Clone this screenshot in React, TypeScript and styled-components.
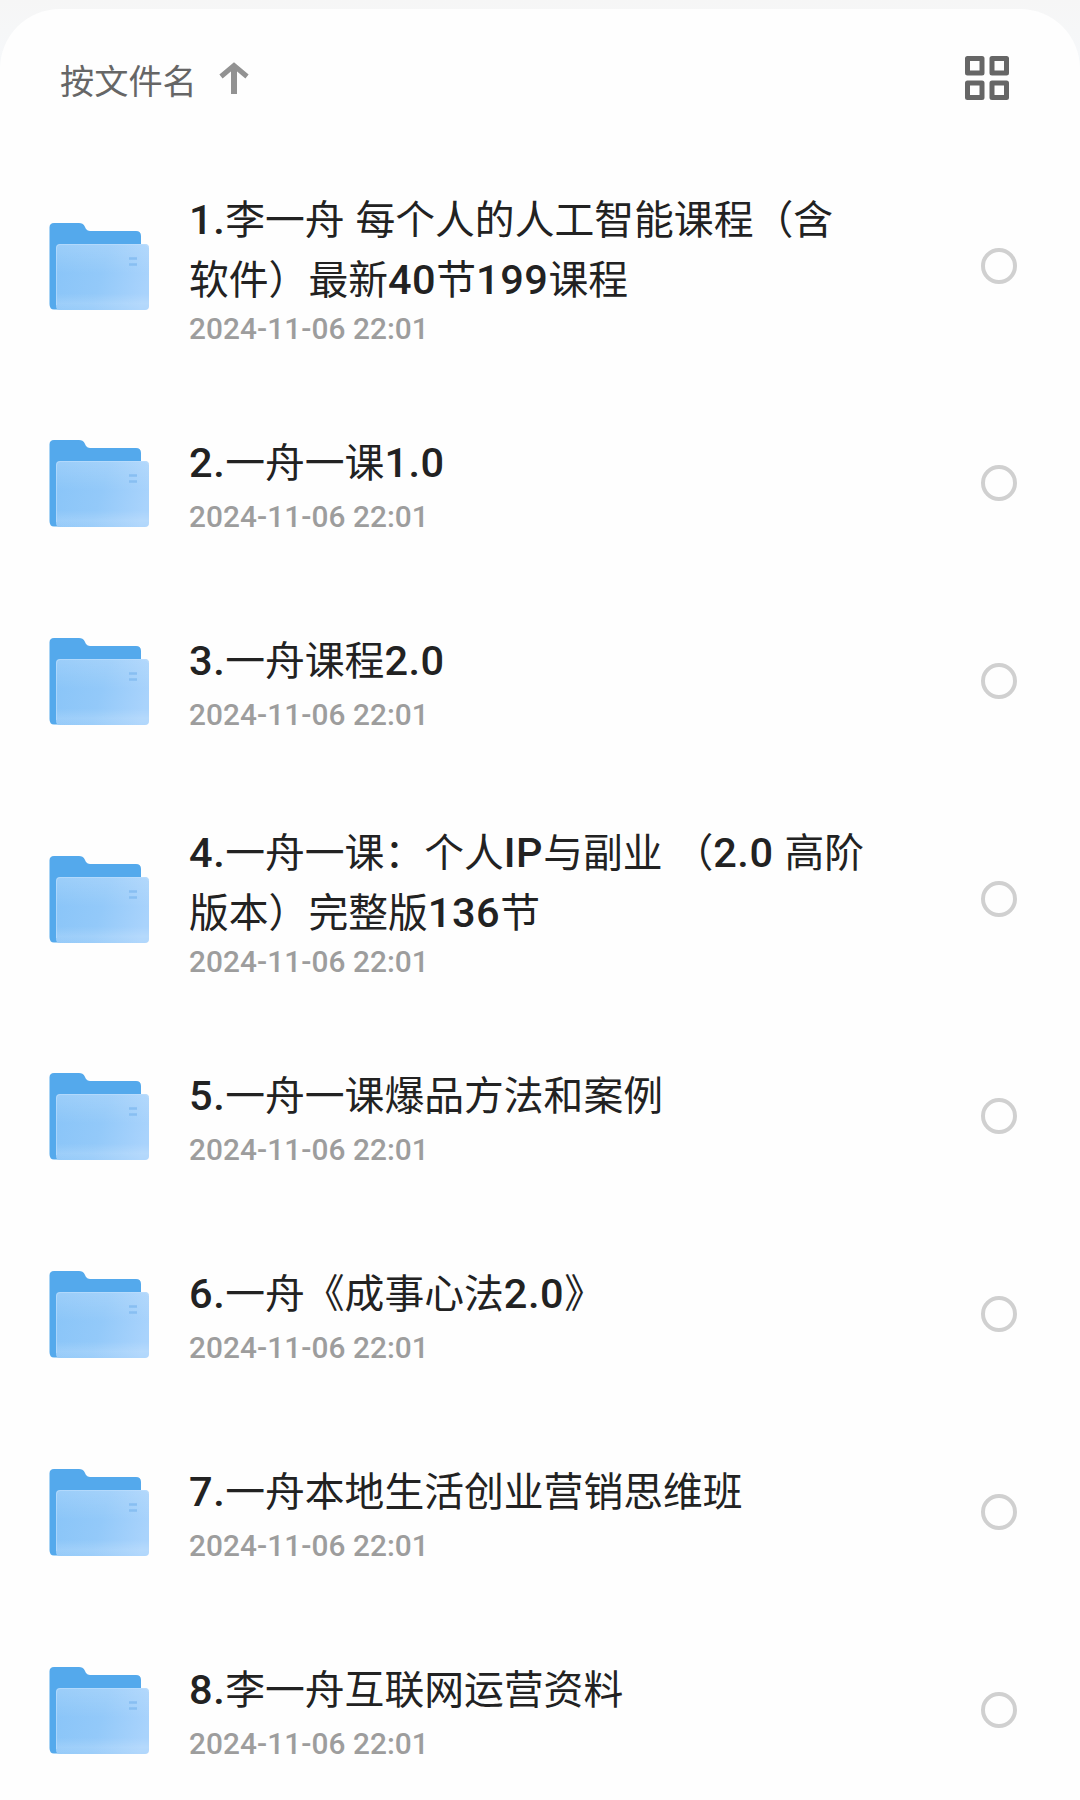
import React from "react";
import styled, { createGlobalStyle } from "styled-components";

const GlobalStyle = createGlobalStyle`
  * { box-sizing: border-box; }
  body { margin: 0; background: #f6f7f8; }
`;

const Screen = styled.main`
  height: 1800px;
  width: 1080px;
  padding-top: 9px;
  overflow: hidden;
  background: linear-gradient(#f6f6f6, #f6f8fa 60px);
  font-family: Roboto, "Noto Sans CJK SC", sans-serif;
`;

const Panel = styled.section`
  height: 1791px;
  overflow: hidden;
  background: #fefefe;
  border-radius: 60px 60px 0 0;
`;

const Header = styled.header`
  display: flex;
  align-items: center;
  justify-content: space-between;
  height: 138px;
  padding: 0 71px 0 60px;
`;

const SortButton = styled.button`
  display: flex;
  align-items: center;
  gap: 22px;
  padding: 2px 0 0;
  border: 0;
  background: none;
  color: #666;
  font: 400 34.2px/50px "Noto Sans CJK SC", sans-serif;
`;

const SortArrow = styled.svg`
  width: 30px;
  height: 32px;
  margin-top: -3px;
`;

const ViewButton = styled.button`
  display: flex;
  padding: 0;
  border: 0;
  background: none;
`;

const List = styled.ul`
  margin: 0;
  padding: 0;
  list-style: none;
`;

const Row = styled.li<{ $tall: boolean }>`
  display: flex;
  align-items: center;
  height: ${(p) => (p.$tall ? 237 : 198)}px;
  padding: 0 63px 0 49px;
`;

const FolderSvg = styled.svg`
  flex: none;
  width: 101px;
  height: 88px;
`;

const Info = styled.div<{ $tall: boolean }>`
  flex: 1;
  margin-left: 39px;
  padding: ${(p) => (p.$tall ? "2px 0 0" : "0 0 2px")};
`;

const Title = styled.div`
  color: #222;
  font: 400 39.8px/60px "Noto Sans CJK SC", sans-serif;
  white-space: nowrap;
`;

const Latin = styled.span`
  font-family: Roboto, sans-serif;
  font-size: 41.5px;
  font-weight: 500;
  line-height: 1;
  letter-spacing: 0.55px;
`;

const DateText = styled.time<{ $tall: boolean }>`
  display: block;
  margin-top: ${(p) => (p.$tall ? 5 : 10)}px;
  color: #9d9d9d;
  font: 500 29.8px/34px Roboto, sans-serif;
  letter-spacing: 0.07px;
`;

const Radio = styled.span`
  flex: none;
  width: 36px;
  height: 36px;
  border: 4px solid #d0d0d0;
  border-radius: 50%;
`;

const files: string[][] = [
  ["1.李一舟 每个人的人工智能课程（含", "软件）最新40节199课程"],
  ["2.一舟一课1.0"],
  ["3.一舟课程2.0"],
  ["4.一舟一课：个人IP与副业 （2.0 高阶", "版本）完整版136节"],
  ["5.一舟一课爆品方法和案例"],
  ["6.一舟《成事心法2.0》"],
  ["7.一舟本地生活创业营销思维班"],
  ["8.李一舟互联网运营资料"],
];

function MixedText({ text }: { text: string }) {
  const runs = text.split(/([\x20-\x7e]+)/).filter(Boolean);
  return (
    <>
      {runs.map((run, i) =>
        /^[\x20-\x7e]/.test(run) ? <Latin key={i}>{run}</Latin> : run
      )}
    </>
  );
}

function FolderIcon() {
  return (
    <FolderSvg viewBox="0 0 101 88">
      <defs>
        <linearGradient id="front" x1="0" y1="0.3" x2="1" y2="0.5">
          <stop offset="0" stopColor="#8ac5f8" />
          <stop offset="0.5" stopColor="#93c9f9" />
          <stop offset="1" stopColor="#a9d3fc" />
        </linearGradient>
        <linearGradient id="shine" x1="0" y1="0" x2="0" y2="1">
          <stop offset="0" stopColor="#fff" stopOpacity="0.16" />
          <stop offset="0.45" stopColor="#fff" stopOpacity="0" />
          <stop offset="0.75" stopColor="#fff" stopOpacity="0" />
          <stop offset="0.9" stopColor="#fff" stopOpacity="0.14" />
          <stop offset="1" stopColor="#fff" stopOpacity="0.08" />
        </linearGradient>
      </defs>
      <path
        d="M5 1H30Q34 1 35.500 4L37 7Q38.500 9 41 9H87Q92 9 92 14V60L14 87.500H5Q.5 87.500 .5 82V5.500Q.5 1 5 1Z"
        fill="#54a9ec"
      />
      <rect x="7" y="22" width="93" height="66" rx="4" fill="url(#front)" />
      <rect x="7" y="22" width="93" height="66" rx="4" fill="url(#shine)" />
      <path
        d="M7.500 83V26Q7.500 22.500 11 22.500H95.500Q99.500 22.500 99.500 26"
        fill="none"
        stroke="#bfe0fd"
        strokeOpacity=".6"
      />
      <path d="M80 36.500H88M80 42.500H88" stroke="#88bff2" strokeWidth="2.600" />
    </FolderSvg>
  );
}

export default function App() {
  return (
    <Screen>
      <GlobalStyle />
      <Panel>
        <Header>
          <SortButton>
            按文件名
            <SortArrow viewBox="0 0 30 32" fill="none" stroke="#929292">
              <path d="M15 32V4" strokeWidth="6" />
              <path d="M2 14.500L15 3.500L28 14.500" strokeWidth="5" />
            </SortArrow>
          </SortButton>
          <ViewButton aria-label="grid">
            <svg width="44" height="44" viewBox="0 0 44 44" fill="none" stroke="#666" strokeWidth="5" strokeLinejoin="round">
              <path d="M2.500 2.500H17V17H2.500ZM27 2.500H41.500V17H27ZM2.500 27H17V41.500H2.500ZM27 27H41.500V41.500H27Z" />
            </svg>
          </ViewButton>
        </Header>
        <List>
          {files.map((lines) => {
            const tall = lines.length > 1;
            return (
              <Row key={lines[0]} $tall={tall}>
                <FolderIcon />
                <Info $tall={tall}>
                  {lines.map((line) => (
                    <Title key={line}>
                      <MixedText text={line} />
                    </Title>
                  ))}
                  <DateText $tall={tall}>2024-11-06 22:01</DateText>
                </Info>
                <Radio />
              </Row>
            );
          })}
        </List>
      </Panel>
    </Screen>
  );
}
